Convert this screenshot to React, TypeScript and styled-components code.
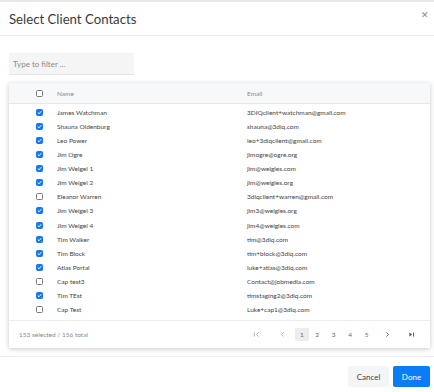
import React from "react";
import styled, { createGlobalStyle } from "styled-components";

const Global = createGlobalStyle`
  html, body { margin: 0; padding: 0; background: #fff; }
  body { font-family: Lato, "Noto Sans", sans-serif; width: 434px; height: 392px; overflow: hidden; }
  * { box-sizing: border-box; }
`;

const Modal = styled.div`
  width: 434px;
  height: 392px;
  background: #fff;
  border-top: 2px solid #e8e8e8;
  display: flex;
  flex-direction: column;
`;

const Header = styled.div`
  height: 34px;
  display: flex;
  align-items: center;
  justify-content: space-between;
  padding: 0 5px 0 9px;
  border-bottom: 1px solid #ececec;
`;

const Title = styled.h1`
  margin: 0;
  font-size: 13.2px;
  font-weight: 400;
  color: #3a3a3a;
`;

const Close = styled.span`
  font-size: 9px;
  color: #888;
  margin-top: -8px;
`;

const Body = styled.div`
  padding: 17px 4px 0 9px;
  display: flex;
  flex-direction: column;
  height: 321px;
  border-bottom: 1px solid #ececec;
`;

const Filter = styled.input`
  width: 125px;
  height: 22px;
  border: none;
  border-bottom: 1px solid #e4e4e4;
  background: #f4f5f6;
  font-family: Lato, sans-serif;
  font-size: 8px;
  padding: 0 4px;
  color: #333;
  outline: none;
  &::placeholder { color: #8a8a8a; }
`;

const Card = styled.div`
  margin-top: 8px;
  width: 421px;
  height: 265px;
  background: #fff;
  box-shadow: 0 1px 5px rgba(0, 0, 0, 0.22);
  display: flex;
  flex-direction: column;
`;

const Row = styled.div<{ $head?: boolean }>`
  display: grid;
  grid-template-columns: 48px 190px 1fr;
  align-items: center;
  height: ${(p) => (p.$head ? "21px" : "14.07px")};
  background: ${(p) => (p.$head ? "#f7f8f9" : "transparent")};
  border-bottom: ${(p) => (p.$head ? "1px solid #e6e8ea" : "none")};
  font-size: 6.5px;
  color: ${(p) => (p.$head ? "#8a8a8a" : "#444")};
`;

const Rows = styled.div`
  flex: 1;
  padding-top: 1.5px;
  border-bottom: 1px solid #ececec;
`;

const Box = styled.span<{ $on: boolean }>`
  margin-left: 27px;
  width: 7px;
  height: 7px;
  border-radius: 1.5px;
  border: 1px solid ${(p) => (p.$on ? "#1677f0" : "#7a7a7a")};
  background: ${(p) => (p.$on ? "#1677f0" : "#fff")};
  display: flex;
  align-items: center;
  justify-content: center;
`;

const Footer = styled.div`
  height: 27px;
  display: flex;
  align-items: center;
  justify-content: space-between;
  padding: 0 7px 0 10px;
  font-size: 6.5px;
  color: #888;
`;

const Pager = styled.div`
  display: flex;
  align-items: center;
`;

const PBtn = styled.span<{ $w?: number; $active?: boolean; $dim?: boolean }>`
  width: ${(p) => p.$w ?? 16.5}px;
  height: 13px;
  display: flex;
  align-items: center;
  justify-content: center;
  border-radius: 1px;
  font-size: 6.5px;
  background: ${(p) => (p.$active ? "#ececec" : "transparent")};
  color: ${(p) => (p.$dim ? "#b5b5b5" : "#666")};
`;

const Actions = styled.div`
  flex: 1;
  display: flex;
  justify-content: flex-end;
  align-items: flex-start;
  gap: 4px;
  padding: 9px 4px 0 0;
`;

const Button = styled.button<{ $primary?: boolean }>`
  height: 21px;
  border: none;
  border-radius: 2px;
  font-family: Lato, sans-serif;
  font-size: 8px;
  padding: 0;
  width: ${(p) => (p.$primary ? "37px" : "41px")};
  background: ${(p) => (p.$primary ? "#0a7cf5" : "#f4f5f6")};
  color: ${(p) => (p.$primary ? "#fff" : "#444")};
`;

const Check = () => (
  <svg width="5" height="5" viewBox="0 0 10 10">
    <path d="M1.5 5.2 L4 7.6 L8.6 2.4" fill="none" stroke="#fff" strokeWidth="2" />
  </svg>
);

const data: [string, string, boolean][] = [
  ["James Watchman", "3DIQclient+watchman@gmail.com", true],
  ["Shauna Oldenburg", "shauna@3diq.com", true],
  ["Leo Power", "leo+3diqclient@gmail.com", true],
  ["Jim Ogre", "jimogre@ogre.org", true],
  ["Jim Weigel 1", "jim@weigles.com", true],
  ["Jim Weigel 2", "jim@weigles.org", true],
  ["Eleanor Warren", "3diqclient+warren@gmail.com", false],
  ["Jim Weigel 3", "jim3@weigles.org", true],
  ["Jim Weigel 4", "jim4@weigles.com", true],
  ["Tim Walker", "tim@3diq.com", true],
  ["Tim Block", "tim+block@3diq.com", true],
  ["Atlas Portal", "luke+atlas@3diq.com", true],
  ["Cap test3", "Contact@jobmedia.com", false],
  ["Tim TEst", "timstaging2@3diq.com", true],
  ["Cap Test", "Luke+cap1@3diq.com", false],
];

const Icon = ({ d, color }: { d: string; color: string }) => (
  <svg width="7" height="7" viewBox="0 0 10 10">
    <path d={d} fill="none" stroke={color} strokeWidth="1.3" />
  </svg>
);

export default function App() {
  return (
    <>
      <Global />
      <Modal>
        <Header>
          <Title>Select Client Contacts</Title>
          <Close>✕</Close>
        </Header>
        <Body>
          <Filter placeholder="Type to filter ..." />
          <Card>
            <Row $head>
              <Box $on={false} />
              <span>Name</span>
              <span>Email</span>
            </Row>
            <Rows>
              {data.map(([n, e, on]) => (
                <Row key={n}>
                  <Box $on={on}>{on && <Check />}</Box>
                  <span>{n}</span>
                  <span>{e}</span>
                </Row>
              ))}
            </Rows>
            <Footer>
              <span>153 selected / 156 total</span>
              <Pager>
                <PBtn $w={26} $dim>
                  <Icon d="M2 2 V8 M8 2 L5 5 L8 8" color="#aaa" />
                </PBtn>
                <PBtn $w={26} $dim>
                  <Icon d="M6.5 2 L3.5 5 L6.5 8" color="#aaa" />
                </PBtn>
                <PBtn $w={14} $active>1</PBtn>
                <PBtn>2</PBtn>
                <PBtn>3</PBtn>
                <PBtn>4</PBtn>
                <PBtn>5</PBtn>
                <PBtn $w={24}>
                  <Icon d="M3.5 2 L6.5 5 L3.5 8" color="#555" />
                </PBtn>
                <PBtn $w={24}>
                  <svg width="7" height="7" viewBox="0 0 10 10">
                    <path d="M2 2 L6 5 L2 8 Z" fill="#555" />
                    <path d="M8 2 V8" stroke="#555" strokeWidth="1.4" />
                  </svg>
                </PBtn>
              </Pager>
            </Footer>
          </Card>
        </Body>
        <Actions>
          <Button>Cancel</Button>
          <Button $primary>Done</Button>
        </Actions>
      </Modal>
    </>
  );
}
